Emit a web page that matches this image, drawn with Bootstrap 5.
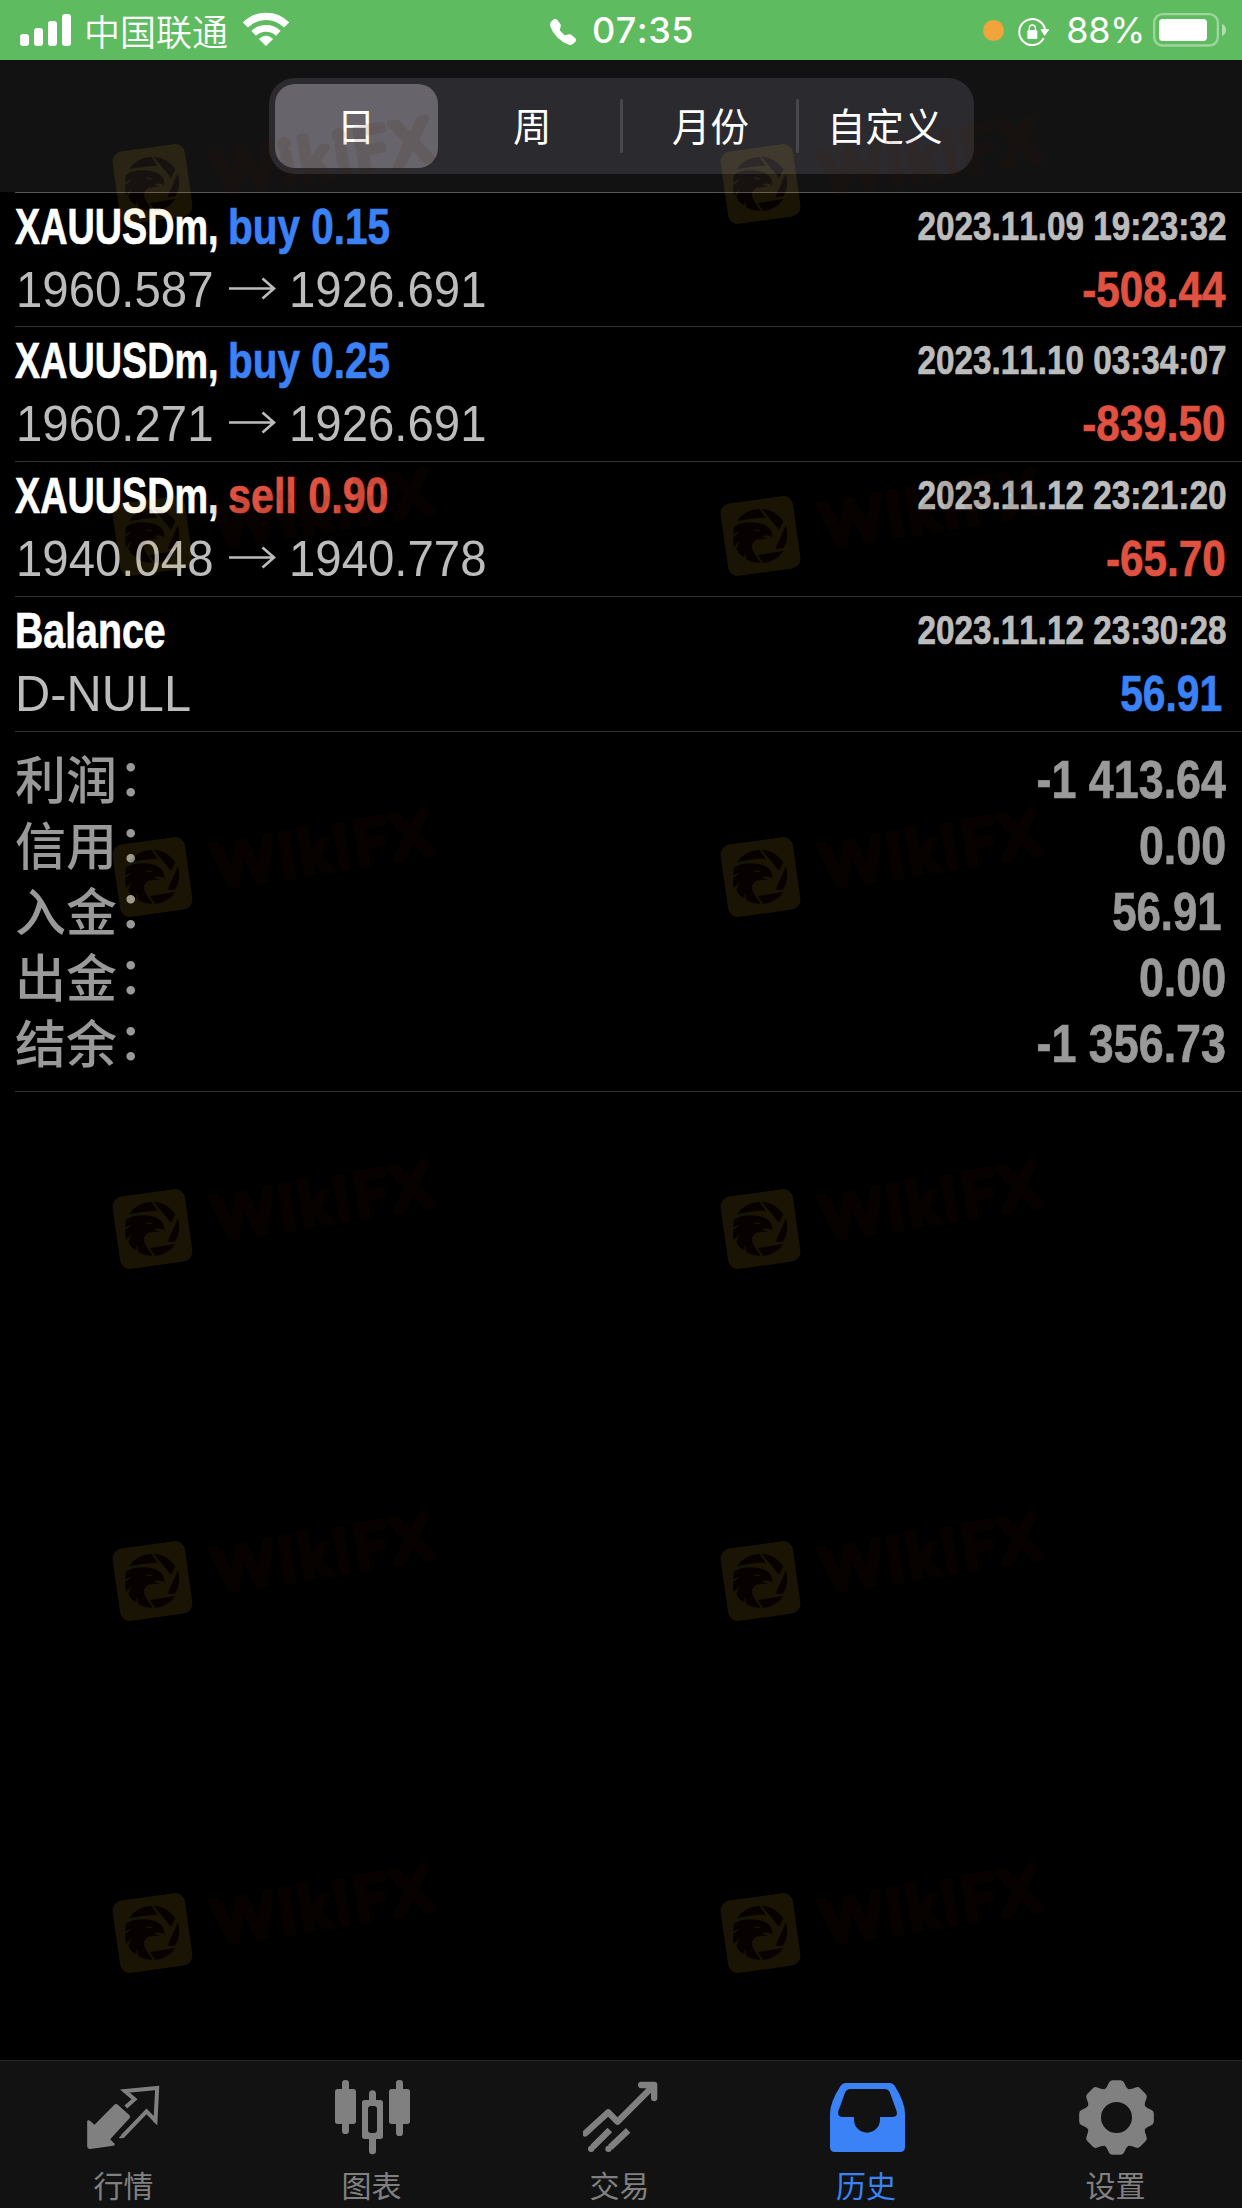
<!DOCTYPE html>
<html lang="zh-CN" data-bs-theme="dark">
<head>
<meta charset="utf-8">
<meta name="viewport" content="width=device-width, initial-scale=1">
<title>历史</title>
<link href="https://cdn.jsdelivr.net/npm/bootstrap@5.3.0/dist/css/bootstrap.min.css" rel="stylesheet">
<style>
  body { background:#000; font-family:"Liberation Sans","Noto Sans CJK SC",sans-serif; font-kerning:none; }
  .screen { width:1242px; height:2208px; overflow:hidden; }
  svg { display:block; flex:none; }
  .statusbar { height:60px; background:#5fbb60; color:#fff; font-family:Inter,"Noto Sans CJK SC",sans-serif; font-size:36px; line-height:62px; }
  .statusbar > div { flex:1 1 0; }
  .bars { margin-left:20px; }
  .carrier { font-family:"Noto Sans CJK SC",sans-serif; font-weight:350; line-height:60px; margin-left:13px; margin-right:15px; }
  .clock { font-weight:500; letter-spacing:.5px; margin-left:16px; }
  .callinfo { padding-left:18px; }
  .rec { width:21px; height:21px; background:#f1a33c; margin-right:14px; }
  .topnav { height:132px; background:#121212; padding-top:18px; }
  .segments { width:705px; height:96px; background:#2b2a2f; border-radius:26px; padding:6px 0; }
  .segments > button { flex:1 1 0; margin:0 7px 0 6px; padding:0; border:0; color:#fff; border-radius:20px; font:400 38.5px/80px "Noto Sans CJK SC",sans-serif; white-space:nowrap; }
  .segments > button.active { background:#67656b; color:#fff; }
  .segments > button > span { display:block; height:84px; }
  .segrule { width:3px; height:54px; background:#47464b; margin:0 -1.5px; border-radius:2px; }
  .deal { margin-left:15px; height:135px; border-top:1px solid #333; padding:3px 16px 0 0; }
  .deal:first-child { height:134px; border-color:#565656; }
  .line { height:62px; line-height:62px; font-size:50px; color:#bcbcbc; }
  .line + .line { height:64px; line-height:64px; }
  .cond { display:inline-block; white-space:nowrap; font-weight:700; transform-origin:left center; -webkit-text-stroke:.7px currentColor; }
  .sym { width:213px; color:#fff; transform:scaleX(.755); }
  .side { transform:scaleX(.81); }
  .wide { transform:scaleX(.825); }
  .label { color:#fff; transform:scaleX(.785); }
  .when { font-size:40px; line-height:60px; transform:scaleX(.832); transform-origin:right center; }
  .gain { transform:scaleX(.845); transform-origin:right center; }
  .gain.short { transform:scaleX(.815); margin-right:4px; }
  .price { display:inline-block; width:212px; margin-left:1px; white-space:nowrap; transform:scaleX(.947); transform-origin:left center; }
  .note { transform:scaleX(.975); margin-left:0; }
  .up { color:#3b82f7; } .down { color:#e05140; }
  .totals { margin-left:15px; height:361px; border-top:1px solid #333; border-bottom:1px solid #333; padding:15px 16px 0 0; color:#999; }
  .totals > div { height:66px; line-height:66px; }
  .totals .what { font:500 51px/60px "Noto Sans CJK SC",sans-serif; }
  .colon { display:inline-block; transform:translate(1px,-3px); }
  .totals .sum { font-size:53px; transform:scaleX(.846); transform-origin:right center; }
  .totals .sum.short { transform:scaleX(.825); margin-right:4px; }
  .tabs { height:148px; background:#121212; border-top:1px solid #2a2a2a; padding:19px 2px 0 0; }
  .tabs a { flex:1 1 0; color:#808080; font:400 30px/42px "Noto Sans CJK SC",sans-serif; text-decoration:none; }
  .tabs a.active { color:#3b82f7; }
  .tabs span { margin-top:8px; margin-right:1px; }
  .marks { pointer-events:none; }
</style>
</head>
<body>
<div class="screen d-flex flex-column position-relative">

  <header class="statusbar d-flex align-items-center">
    <div class="d-flex align-items-center">
      <svg class="bars" width="51" height="60" viewBox="60 0 153 180" fill="#fff"><rect x="60" y="102" width="27" height="36" rx="9"/><rect x="102" y="84" width="27" height="54" rx="9"/><rect x="144" y="63" width="27" height="75" rx="9"/><rect x="186" y="42" width="27" height="96" rx="9"/></svg>
      <span class="carrier">中国联通</span>
      <svg width="46" height="60" viewBox="729 0 138 180" fill="none" stroke="#fff"><path d="M736 75A87 87 0 0 1 860 75" stroke-width="22"/><path d="M761 100A53 53 0 0 1 835 100" stroke-width="20"/><path d="M798 137L778 117Q798 99 818 117Z" fill="#fff" stroke-width="2" stroke-linejoin="round"/></svg>
    </div>
    <div class="callinfo d-flex align-items-center justify-content-center">
      <svg width="26" height="26" viewBox="0 0 16 16" fill="#fff" class="mt-1"><path d="M1.885.511a1.745 1.745 0 0 1 2.61.163L6.29 2.98c.329.423.445.974.315 1.494l-.547 2.19a.678.678 0 0 0 .178.643l2.457 2.457a.678.678 0 0 0 .644.178l2.189-.547a1.745 1.745 0 0 1 1.494.315l2.306 1.794c.829.645.905 1.87.163 2.611l-1.034 1.034c-.74.74-1.846 1.065-2.877.702a18.634 18.634 0 0 1-7.01-4.42 18.634 18.634 0 0 1-4.42-7.009c-.362-1.03-.037-2.137.703-2.877z"/></svg>
      <span class="clock">07:35</span>
    </div>
    <div class="d-flex align-items-center justify-content-end pe-3">
      <span class="rec rounded-circle"></span>
      <svg width="32" height="60" viewBox="542 0 96 180" fill="none" stroke="#fff" stroke-width="6"><path d="M619 115A39 39 0 1 1 623 88"/><path d="M611 89H634L622 106Z" fill="#fff" stroke-width="3" stroke-linejoin="round"/><rect x="570" y="90" width="30" height="27" rx="4" fill="#fff" stroke="none"/><path d="M576 92V84a9 9 0 0 1 18 0V92" stroke-width="4"/></svg>
      <span class="ms-3" style="margin-right:8px;letter-spacing:-.4px">88%</span>
      <svg width="73" height="60" viewBox="939 0 219 180" fill="#fff"><rect x="942.500" y="42.500" width="191" height="94" rx="25" fill="none" stroke="#fff" stroke-opacity=".4" stroke-width="7"/><rect x="957" y="57" width="144" height="66" rx="11"/><path d="M1146 72Q1158 77 1158 90T1146 108Z" fill-opacity=".5"/></svg>
    </div>
  </header>

  <nav class="topnav d-flex justify-content-center align-items-start">
    <div class="segments d-flex align-items-center">
      <button class="active align-self-stretch"><span>日</span></button>
      <button class="bg-transparent"><span>周</span></button>
      <span class="segrule"></span>
      <button class="bg-transparent"><span class="ps-1">月份</span></button>
      <span class="segrule"></span>
      <button class="bg-transparent"><span>自定义</span></button>
    </div>
  </nav>

  <main class="flex-grow-1">
    <section>
      <div class="deal">
        <div class="line d-flex justify-content-between"><div><span class="cond sym">XAUUSDm,</span><span class="cond side up">buy 0.15</span></div><span class="cond when">2023.11.09 19:23:32</span></div>
        <div class="line d-flex justify-content-between"><div class="d-flex align-items-center"><span class="price">1960.587</span><svg width="60" height="62" viewBox="0 0 60 62" fill="none" stroke="#bcbcbc" stroke-width="2.600"><path d="M1 29.500H46M34.500 19.500L46 29.500L34.500 39.500"/></svg><span class="price">1926.691</span></div><span class="cond gain down">-508.44</span></div>
      </div>
      <div class="deal">
        <div class="line d-flex justify-content-between"><div><span class="cond sym">XAUUSDm,</span><span class="cond side up">buy 0.25</span></div><span class="cond when">2023.11.10 03:34:07</span></div>
        <div class="line d-flex justify-content-between"><div class="d-flex align-items-center"><span class="price">1960.271</span><svg width="60" height="62" viewBox="0 0 60 62" fill="none" stroke="#bcbcbc" stroke-width="2.600"><path d="M1 29.500H46M34.500 19.500L46 29.500L34.500 39.500"/></svg><span class="price">1926.691</span></div><span class="cond gain down">-839.50</span></div>
      </div>
      <div class="deal">
        <div class="line d-flex justify-content-between"><div><span class="cond sym">XAUUSDm,</span><span class="cond side wide down">sell 0.90</span></div><span class="cond when">2023.11.12 23:21:20</span></div>
        <div class="line d-flex justify-content-between"><div class="d-flex align-items-center"><span class="price">1940.048</span><svg width="60" height="62" viewBox="0 0 60 62" fill="none" stroke="#bcbcbc" stroke-width="2.600"><path d="M1 29.500H46M34.500 19.500L46 29.500L34.500 39.500"/></svg><span class="price">1940.778</span></div><span class="cond gain down">-65.70</span></div>
      </div>
      <div class="deal">
        <div class="line d-flex justify-content-between"><span class="cond label">Balance</span><span class="cond when">2023.11.12 23:30:28</span></div>
        <div class="line d-flex justify-content-between"><span class="price note">D-NULL</span><span class="cond gain short up">56.91</span></div>
      </div>
    </section>
    <section class="totals">
      <div class="d-flex justify-content-between"><span class="what">利润<span class="colon">：</span></span><span class="cond sum">-1 413.64</span></div>
      <div class="d-flex justify-content-between"><span class="what">信用<span class="colon">：</span></span><span class="cond sum">0.00</span></div>
      <div class="d-flex justify-content-between"><span class="what">入金<span class="colon">：</span></span><span class="cond sum short">56.91</span></div>
      <div class="d-flex justify-content-between"><span class="what">出金<span class="colon">：</span></span><span class="cond sum">0.00</span></div>
      <div class="d-flex justify-content-between"><span class="what">结余<span class="colon">：</span></span><span class="cond sum">-1 356.73</span></div>
    </section>
  </main>

  <footer class="tabs d-flex">
    <a href="#" class="d-flex flex-column align-items-center">
      <svg width="75" height="75" viewBox="260.500 90 225 225"><path fill="currentColor" d="M344 163q5-3 9 1L388 196q4 5 0 9L330 268L344 282q0 4-4 5L270 297q-8 0-9-8V213q4-5 9 0L283 224Z"/><path fill="none" stroke="currentColor" stroke-width="12" stroke-linejoin="miter" d="M377 171L403 148L374 123L471 114L466 212L439 184L367 259"/><path fill="currentColor" d="M356 264L366 253L374 260Q370 267 356 264Z"/><circle cx="374" cy="123" r="6" fill="currentColor"/><circle cx="465" cy="212" r="6" fill="currentColor"/></svg>
      <span>行情</span></a>
    <a href="#" class="d-flex flex-column align-items-center">
      <svg width="75" height="75" viewBox="1005 90 225 225" fill="currentColor"><rect x="1026" y="90" width="21" height="162" rx="10"/><rect x="1005" y="117" width="63" height="105" rx="8"/><rect x="1188" y="90" width="21" height="168" rx="10"/><rect x="1167" y="117" width="63" height="105" rx="8"/><path fill-rule="evenodd" d="M1107 150V131a10.500 10.500 0 0 1 21 0V150H1141q8 0 8 8V259q0 8-8 8H1128V302a10.500 10.500 0 0 1-21 0V267H1094q-8 0-8-8V158q0-8 8-8ZM1113 168q-9 0-9 9V240q0 9 9 9H1122q9 0 9-9V177q0-9-9-9Z"/></svg>
      <span>图表</span></a>
    <a href="#" class="d-flex flex-column align-items-center">
      <svg width="75" height="75" viewBox="428.500 90 225 225" fill="none" stroke="currentColor" stroke-width="19" stroke-linejoin="round"><path stroke-linecap="round" d="M435 250L504 187L532 215L640 107M603 105H642V144"/><path d="M509 240L457 292M564 241L510 292"/><g fill="currentColor" stroke="none"><circle cx="453" cy="296.500" r="9.500"/><circle cx="505" cy="296.500" r="9.500"/></g></svg>
      <span>交易</span></a>
    <a href="#" class="active d-flex flex-column align-items-center">
      <svg width="75" height="75" viewBox="1173 90 225 225" overflow="visible"><path fill="currentColor" fill-rule="evenodd" d="M1216 99H1350Q1359 99 1364 107Q1395 156 1395 192V291Q1395 306 1380 306H1185Q1170 306 1170 291V192Q1170 156 1202 107Q1207 99 1216 99ZM1231 117Q1220 117 1215 128L1195 184Q1192 201 1206 201H1242V209A39 39 0 0 0 1320 209V201H1358Q1374 201 1370 184L1350 128Q1345 117 1334 117Z"/></svg>
      <span class="me-1">历史</span></a>
    <a href="#" class="d-flex flex-column align-items-center">
      <svg width="75" height="75" viewBox="-112.500 -112.500 225 225" fill="currentColor"><defs><path id="tooth" d="M-36-84Q-28-90-23-104Q-20-112-12-112H12Q20-112 23-104Q28-90 36-84Z"/></defs><circle r="69" fill="none" stroke="currentColor" stroke-width="45"/><use href="#tooth"/><use href="#tooth" transform="rotate(45)"/><use href="#tooth" transform="rotate(90)"/><use href="#tooth" transform="rotate(135)"/><use href="#tooth" transform="rotate(180)"/><use href="#tooth" transform="rotate(225)"/><use href="#tooth" transform="rotate(270)"/><use href="#tooth" transform="rotate(315)"/></svg>
      <span>设置</span></a>
  </footer>

  <!-- translucent brand stamps laid over the whole screen -->
  <svg class="marks position-absolute top-0 start-0" width="1242" height="2208" viewBox="0 0 1242 2208">
    <defs>
      <g id="stamp" opacity=".11">
        <rect x="-36.500" y="-36.500" width="73" height="73" rx="10" fill="#ebb928" transform="rotate(-8)"/>
        <g transform="scale(.3333) translate(-187 -298)" fill="#461900">
          <path d="M116 254Q139 218 183 216L203 243Q150 246 116 254Z"/>
          <path d="M190 216Q232 218 256 254L243 280Z"/>
          <path d="M263 266Q275 302 256 335L231 338Z"/>
          <path d="M178 355L256 342Q235 376 195 379Z"/>
          <path d="M107 270Q130 255 160 257Q205 258 218 280Q225 290 221 302Q211 294 199 297Q183 298 210 305Q192 309 178 308Q159 317 162 335Q168 352 188 379Q155 377 144 367L141 345L138 363Q121 352 114 337L124 312L108 332Q102 317 106 300L127 284L105 293Z"/>
          <path d="M164 278Q175 282 187 279Q181 290 164 278Z" fill="#ebb928"/>
        </g>
        <text transform="rotate(-9.200)" x="62" y="21.500" font-family="Lato,sans-serif" font-weight="400" font-size="60" textLength="220" lengthAdjust="spacing" fill="#461900" stroke="#461900" stroke-width="6.500" stroke-linejoin="round">WikiFX</text>
      </g>
    </defs>
    <use href="#stamp" x="152.500" y="184"/><use href="#stamp" x="760.500" y="184"/>
    <use href="#stamp" x="152.500" y="536"/><use href="#stamp" x="760.500" y="536"/>
    <use href="#stamp" x="152.500" y="877"/><use href="#stamp" x="760.500" y="877"/>
    <use href="#stamp" x="152.500" y="1229"/><use href="#stamp" x="760.500" y="1229"/>
    <use href="#stamp" x="152.500" y="1581"/><use href="#stamp" x="760.500" y="1581"/>
    <use href="#stamp" x="152.500" y="1933"/><use href="#stamp" x="760.500" y="1933"/>
  </svg>
</div>
<script src="https://cdn.jsdelivr.net/npm/bootstrap@5.3.0/dist/js/bootstrap.bundle.min.js"></script>
</body>
</html>
